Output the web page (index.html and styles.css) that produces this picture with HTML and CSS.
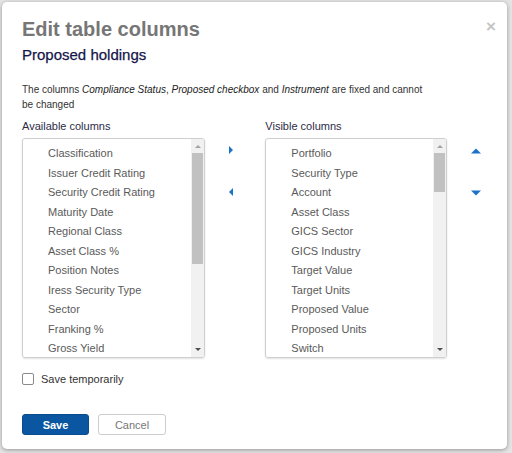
FILE: index.html
```html
<!DOCTYPE html>
<html>
<head>
<meta charset="utf-8">
<link rel="stylesheet" href="styles.css">
</head>
<body>
<div class="modal">
  <div class="close">&times;</div>
  <h1 class="title">Edit table columns</h1>
  <h2 class="subtitle">Proposed holdings</h2>
  <p class="desc">The columns <em>Compliance Status</em>, <em>Proposed checkbox</em> and <em>Instrument</em> are fixed and cannot be changed</p>
  <div class="columns">
    <div class="col">
      <div class="label">Available columns</div>
      <div class="listbox">
        <ul class="items">
          <li>Classification</li>
          <li>Issuer Credit Rating</li>
          <li>Security Credit Rating</li>
          <li>Maturity Date</li>
          <li>Regional Class</li>
          <li>Asset Class %</li>
          <li>Position Notes</li>
          <li>Iress Security Type</li>
          <li>Sector</li>
          <li>Franking %</li>
          <li>Gross Yield</li>
        </ul>
        <div class="scrollbar">
          <div class="sb-arrow up"></div>
          <div class="sb-track"><div class="thumb thumb-left"></div></div>
          <div class="sb-arrow down"></div>
        </div>
      </div>
    </div>
    <div class="movers">
      <svg class="arrow" width="6" height="8" viewBox="0 0 6 8"><path d="M1 0 L5 4 L1 8 Z" fill="#1a73c8"/></svg>
      <svg class="arrow" width="6" height="8" viewBox="0 0 6 8"><path d="M5 0 L1 4 L5 8 Z" fill="#1a73c8"/></svg>
    </div>
    <div class="col">
      <div class="label">Visible columns</div>
      <div class="listbox narrow">
        <ul class="items">
          <li>Portfolio</li>
          <li>Security Type</li>
          <li>Account</li>
          <li>Asset Class</li>
          <li>GICS Sector</li>
          <li>GICS Industry</li>
          <li>Target Value</li>
          <li>Target Units</li>
          <li>Proposed Value</li>
          <li>Proposed Units</li>
          <li>Switch</li>
        </ul>
        <div class="scrollbar">
          <div class="sb-arrow up"></div>
          <div class="sb-track"><div class="thumb thumb-right"></div></div>
          <div class="sb-arrow down"></div>
        </div>
      </div>
    </div>
    <div class="orderers">
      <svg class="arrow" width="10" height="6" viewBox="0 0 10 6"><path d="M0 5.5 L5 0.5 L10 5.5 Z" fill="#1a73c8"/></svg>
      <svg class="arrow" width="10" height="6" viewBox="0 0 10 6"><path d="M0 0.5 L10 0.5 L5 5.5 Z" fill="#1a73c8"/></svg>
    </div>
  </div>
  <label class="check"><span class="box"></span><span>Save temporarily</span></label>
  <div class="buttons">
    <button class="btn primary">Save</button>
    <button class="btn secondary">Cancel</button>
  </div>
</div>
</body>
</html>
```

FILE: styles.css
```css
* { box-sizing: border-box; }
html, body { margin: 0; padding: 0; }
body {
  width: 512px;
  height: 453px;
  background: #e4e4e4;
  font-family: "Liberation Sans", Arial, sans-serif;
  padding: 2px 0 0 2px;
  overflow: hidden;
}
.modal {
  position: relative;
  width: 505px;
  height: 447px;
  background: #fff;
  border-radius: 5px;
  box-shadow: 0 1px 4px rgba(0,0,0,0.35);
  padding: 15px 20px 0 20px;
}
.close {
  position: absolute;
  top: 15px;
  right: 11px;
  font-size: 17px;
  font-weight: bold;
  color: #c4c4c4;
  line-height: 20px;
}
.title {
  margin: 0;
  font-size: 20px;
  line-height: 24px;
  font-weight: bold;
  color: #767676;
}
.subtitle {
  margin: 4px 0 0 0;
  font-size: 15px;
  line-height: 20px;
  font-weight: normal;
  color: #15154a;
  -webkit-text-stroke: 0.25px #15154a;
}
.desc {
  margin: 17px 0 0 0;
  width: 410px;
  font-size: 10px;
  line-height: 15px;
  color: #333;
}
.desc em { font-style: italic; color: #222; }
.columns {
  display: flex;
  margin-top: 7px;
}
.col { display: flex; flex-direction: column; }
.label {
  font-size: 11px;
  line-height: 14px;
  color: #2c2c48;
  height: 19px;
}
.listbox {
  display: flex;
  width: 183px;
  height: 220px;
  border: 1px solid #cfcfcf;
  border-radius: 3px;
  box-shadow: 0 1px 2px rgba(0,0,0,0.12);
  overflow: hidden;
}
.listbox.narrow { width: 182px; }
.items {
  list-style: none;
  margin: 0;
  padding: 5px 0 0 25px;
  flex: 1;
}
.items li {
  height: 19.5px;
  line-height: 19.5px;
  font-size: 11px;
  color: #5a5a5a;
  white-space: nowrap;
}
.scrollbar {
  width: 13px;
  display: flex;
  flex-direction: column;
  background: #f1f1f1;
}
.sb-arrow {
  height: 14px;
  position: relative;
}
.sb-arrow::after {
  content: "";
  position: absolute;
  left: 4px;
  width: 0;
  height: 0;
  border-left: 3px solid transparent;
  border-right: 3px solid transparent;
}
.sb-arrow.up::after { top: 6px; border-bottom: 3px solid #a3a3a3; }
.sb-arrow.down::after { top: 5px; border-top: 3px solid #505050; }
.sb-track { flex: 1; padding: 0 1px; }
.thumb { background: #c1c1c1; }
.thumb-left { height: 111px; }
.thumb-right { height: 39px; }
.movers {
  width: 61px;
  display: flex;
  flex-direction: column;
  align-items: center;
  gap: 34px;
  padding-top: 27px;
  padding-right: 9px;
}
.orderers {
  width: 40px;
  display: flex;
  flex-direction: column;
  align-items: center;
  gap: 36px;
  padding-top: 29px;
  padding-left: 17px;
}
.arrow { display: block; }
.check {
  display: flex;
  align-items: center;
  gap: 7px;
  margin-top: 13px;
  font-size: 11px;
  color: #333;
  height: 16px;
}
.box {
  width: 12px;
  height: 12px;
  border: 1px solid #8a8a8a;
  border-radius: 2px;
  background: #fff;
}
.buttons {
  display: flex;
  gap: 9px;
  margin-top: 27px;
}
.btn {
  width: 67px;
  height: 21px;
  border-radius: 3px;
  font-family: "Liberation Sans", Arial, sans-serif;
  font-size: 11px;
  padding: 0;
}
.primary {
  background: #0b56a0;
  border: 1px solid #0a4d8f;
  color: #fff;
  font-weight: bold;
}
.secondary {
  width: 68px;
  background: #fff;
  border: 1px solid #cccccc;
  color: #777;
}
```
